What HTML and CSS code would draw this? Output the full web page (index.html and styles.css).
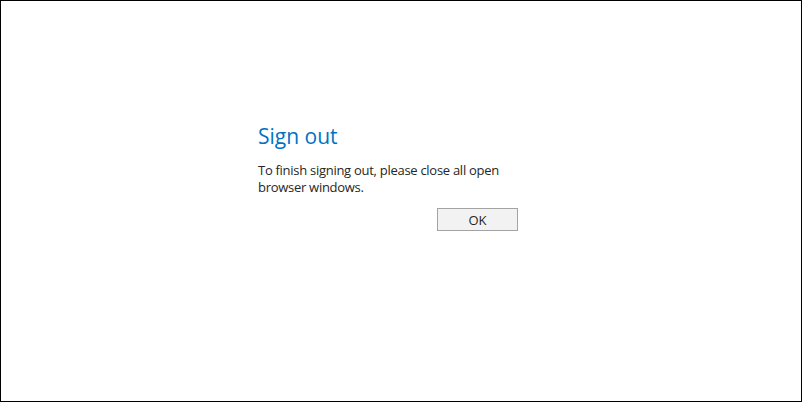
FILE: index.html
```html
<!DOCTYPE html>
<html>
<head>
<meta charset="utf-8">
<link rel="stylesheet" href="styles.css">
</head>
<body>
<div class="frame">
  <div class="dialog">
    <h1 class="title">Sign out</h1>
    <p class="message">To finish signing out, please close all open browser windows.</p>
    <div class="actions">
      <button class="btn">OK</button>
    </div>
  </div>
</div>
</body>
</html>
```
FILE: styles.css
```css
html, body {
  margin: 0;
  padding: 0;
  background: #fff;
}
.frame {
  box-sizing: border-box;
  width: 802px;
  height: 402px;
  border: 1px solid #000;
  display: flex;
  padding: 121px 0 0 257px;
  font-family: "Open Sans", "Noto Sans", sans-serif;
}
.dialog {
  width: 260px;
}
.title {
  margin: 0;
  font-weight: normal;
  font-size: 21px;
  line-height: 28px;
  color: #0072c6;
}
.message {
  margin: 12px 0 0;
  font-size: 13px;
  letter-spacing: -0.28px;
  line-height: 17px;
  color: #262626;
}
.actions {
  display: flex;
  justify-content: flex-end;
  margin-top: 12px;
}
.btn {
  box-sizing: border-box;
  width: 81px;
  height: 23px;
  margin-right: 0;
  border: 1px solid #a3a3a3;
  background: #f2f2f2;
  font-family: inherit;
  font-size: 13px;
  color: #262626;
  padding: 0;
}
```
